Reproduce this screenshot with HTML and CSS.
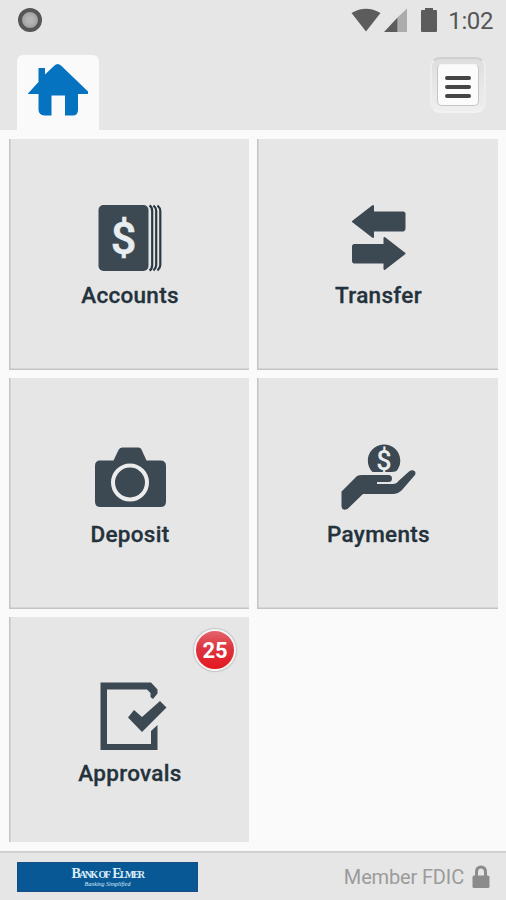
FILE: index.html
```html
<!DOCTYPE html>
<html lang="en">
<head>
<meta charset="utf-8">
<title>Bank of Elmer</title>
<link rel="stylesheet" href="styles.css">
</head>
<body>
<header class="header">
  <div class="status">
    <span class="recording"></span>
    <svg class="status-icons" viewBox="350 0 90 40" aria-hidden="true">
      <path d="M351.5 13Q366 4.500 380.500 13L366 31.500Z"/>
      <path class="signal-rest" d="M397.500 17.500L407 8.500V32H397.500Z"/>
      <path d="M384 32L397.500 17.500V32Z"/>
      <path d="M421 11Q421 10 422 10H425V8H433V10H436Q437 10 437 11V31Q437 32 436 32H422Q421 32 421 31Z"/>
    </svg>
    <span class="clock">1:02</span>
  </div>
  <nav class="nav">
    <a class="home" aria-label="Home">
      <svg viewBox="17 55 82 75"><path d="M28 93.500L38.500 82V68H45V74.500L54.500 65.500Q57.500 62.500 61 65.500L88 91.500V94H78V110Q78 115.500 72.500 115.500H65V95.500H51.500V115.500H44.500Q38.500 115 38.500 109.500V94H28Z"/></svg>
    </a>
    <button class="menu" aria-label="Menu"><span class="menu-face"><i></i><i></i><i></i></span></button>
  </nav>
</header>
<main class="tiles">
  <a class="tile">
    <svg class="icon" viewBox="80 200 100 80">
      <rect x="98.500" y="205" width="50" height="66" rx="5"/>
      <path class="edge" d="M149.500 205.500Q152.200 207 152.200 211V265Q152.200 269 149.500 270.500M153.500 205.500Q156.200 208 156.200 211V265Q156.200 268 153.500 270.500M157.500 205.500Q160.300 208 160.300 211V265Q160.300 268 157.500 270.500"/>
      <text class="dollar" transform="translate(123.500 254)">$</text>
    </svg>
    <span class="label">Accounts</span>
  </a>
  <a class="tile">
    <svg class="icon rounded" viewBox="328 200 100 80">
      <path d="M353 221.500L373 206V212.500H403.500L404.500 213.500V229L403.500 230.500H373V237ZM404.500 253.500L384.500 269V262.500H354L353 261.500V246L354 245H384.500V238Z"/>
    </svg>
    <span class="label">Transfer</span>
  </a>
  <a class="tile">
    <svg class="icon" viewBox="80 439 100 80">
      <path d="M100 460.500H113.500L118.500 450Q119.700 447.500 122 447.500H138.500Q140.500 447.500 141.500 449.500L146.500 460.500H160.500Q166 460.500 166 466V501.500Q166 507 160.500 507H100.500Q95 507 95 501.500V466Q95 460.500 100 460.500Z"/>
      <circle class="lens" cx="130" cy="482.500" r="17"/>
    </svg>
    <span class="label">Deposit</span>
  </a>
  <a class="tile">
    <svg class="icon" viewBox="328 439 100 80">
      <path d="M372.500 472A16.200 16.200 0 1 1 396.500 471Q394 472 391.500 472Z"/>
      <text class="coin" x="384" y="469.500">$</text>
      <path d="M341.500 491.500L357 476Q359 475 362 475H388.500Q392 475 392 478.500Q392 482 388.500 482H377V484H392.500Q396.500 484 399 480.500L409 471.500Q412 469.500 414.500 471Q416.500 473 414.500 475.500L402 490Q398 494 393 494H363L347.500 509Q342 511.500 341.500 506Z"/>
    </svg>
    <span class="label">Payments</span>
  </a>
  <a class="tile tile-short">
    <svg class="icon" viewBox="80 678 100 80">
      <path d="M100.500 682.500H151L157.500 689.500V693.500L153 699L150.500 697V693L147 689.500H107V744H151V731L157.500 725V750H100.500Z"/>
      <path d="M128 717.500L134 710L142 717L160 701L166.500 707.500L142 732Z"/>
    </svg>
    <span class="label">Approvals</span>
    <span class="badge">25</span>
  </a>
</main>
<footer class="footer">
  <div class="brand"><span class="brand-name">B<small>ANK OF</small> E<small>LMER</small></span><span class="tagline">Banking Simplified</span></div>
  <span class="member">Member FDIC</span>
  <svg class="lock" viewBox="0 0 18 24"><path class="shackle" d="M4.500 12V7Q4.500 2 9 2T13.500 7V12"/><rect x=".5" y="10.500" width="17" height="12.500" rx="1.500"/></svg>
</footer>
</body>
</html>
```

FILE: styles.css
```css
* { box-sizing: border-box; }
body {
  margin: 0;
  height: 900px;
  display: flex;
  flex-direction: column;
  overflow: hidden;
  background: #fafafa;
  font-family: Roboto, sans-serif;
}
.header { height: 130px; background: #e6e6e6; }
.status { height: 40px; display: flex; align-items: center; padding: 0 13px 0 18px; }
.recording {
  width: 24px;
  height: 24px;
  border-radius: 50%;
  border: 4px solid #565656;
  background: radial-gradient(circle, #b5b5b5 25%, #929292);
}
.status-icons { width: 90px; height: 40px; margin-left: auto; fill: #5c5c5c; }
.signal-rest { fill: #acacac; }
.clock { width: 53px; margin-top: 2px; text-align: right; font-size: 24px; line-height: 28px; color: #555; letter-spacing: -.4px; }
.nav { height: 90px; display: flex; justify-content: space-between; padding: 15px 20px 0 17px; }
.home { width: 82px; height: 75px; background: #fafafa; border-radius: 6px 6px 0 0; }
.home svg { display: block; width: 82px; height: 75px; fill: #0673c1; }
.menu {
  width: 56px;
  height: 56px;
  margin-top: 2px;
  padding: 5px;
  border: 2px solid #ededed;
  border-top-color: #cfcfcf;
  border-bottom-color: #f3f3f3;
  border-radius: 10px;
  background: linear-gradient(#dedede, #efefef);
}
.menu-face {
  width: 42px;
  height: 42px;
  display: flex;
  flex-direction: column;
  align-items: center;
  justify-content: center;
  gap: 5px;
  padding-top: 3px;
  background: #fbfbfb;
  border: 1px solid #c5c5c5;
  border-top-color: #f5f5f5;
  border-radius: 5px;
}
.menu-face i { width: 26px; height: 4px; border-radius: 2px; background: #454545; }
.tiles {
  height: 721px;
  display: grid;
  grid-template: 231px 231px 225px / 240px 241px;
  gap: 8px;
  padding: 9px 8px 0 9px;
}
.tile {
  position: relative;
  display: flex;
  flex-direction: column;
  align-items: center;
  padding: 61px 0 0 1px;
  background: #e6e6e6;
  box-shadow: inset 1.500px 0 0 #c3c3c3, inset 0 -1.500px 0 #c3c3c3;
}
.tile-short { box-shadow: inset 1.500px 0 0 #c3c3c3; }
.icon { width: 100px; height: 80px; fill: #3c4952; }
.rounded { stroke: #3c4952; stroke-width: 2; stroke-linejoin: round; }
.edge { fill: none; stroke: #2b3943; stroke-width: 2.200; }
.dollar { fill: #e9edef; stroke: #e9edef; stroke-width: .6; font: 500 45px Roboto, sans-serif; text-anchor: middle; }
.coin { fill: #e9edef; font: 500 27px Roboto, sans-serif; text-anchor: middle; }
.lens { fill: none; stroke: #ececec; stroke-width: 4; }
.label { margin-top: 1px; padding-left: 1px; color: #24323c; font-size: 22.500px; font-weight: 500; line-height: 29px; letter-spacing: .3px; -webkit-text-stroke: .3px #24323c; }
.badge {
  position: absolute;
  top: 12px;
  right: 13px;
  width: 42px;
  height: 42px;
  border-radius: 50%;
  border: 2px solid #f5f5f5;
  box-shadow: 0 0 2px #777;
  background: linear-gradient(#e4646c, #dc3540 45%, #e61820);
  color: #fff;
  font-size: 22px;
  font-weight: 700;
  line-height: 39px;
  text-align: center;
}
.footer {
  height: 49px;
  display: flex;
  align-items: center;
  padding: 0 16px 0 17px;
  background: #e6e6e6;
  border-top: 2px solid #d0d0d0;
}
.brand {
  width: 181px;
  height: 30px;
  display: flex;
  flex-direction: column;
  align-items: center;
  justify-content: center;
  border: 1px solid #174c85;
  background: #075895;
  color: #dcecf8;
  font-family: "Liberation Serif", serif;
}
.brand-name { font-size: 14px; font-weight: 700; line-height: 13px; letter-spacing: -1.600px; word-spacing: 1px; white-space: nowrap; }
.brand-name small { font-size: 10px; }
.tagline { font: italic 6px/6px "Liberation Serif", serif; }
.member { margin-left: auto; color: #9b9b9b; font-size: 20px; line-height: 24px; letter-spacing: -.15px; }
.lock { width: 18px; height: 24px; margin-left: 8px; fill: #8b8b8b; }
.shackle { fill: none; stroke: #8b8b8b; stroke-width: 3; }
```
